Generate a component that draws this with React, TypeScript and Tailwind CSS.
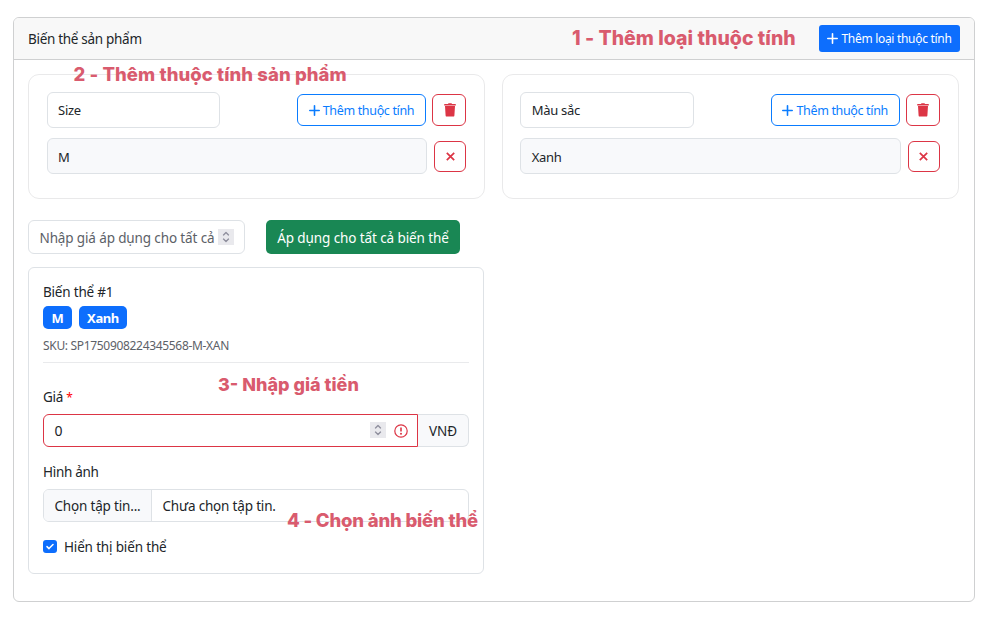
import React from "react";

function Plus() {
  return (
    <svg viewBox="0 0 11 11" className="h-[11px] w-[11px] shrink-0" fill="none" stroke="currentColor" strokeWidth="1.6" strokeLinecap="round">
      <path d="M5.5 0.8v9.4M0.8 5.5h9.4" />
    </svg>
  );
}

function Trash() {
  return (
    <svg viewBox="0 0 12 14" className="ml-px h-[14px] w-[12px]" fill="currentColor">
      <path d="M4 0.9 4.5 0.2h3l.5.7h3.4a.4.4 0 0 1 .4.4v1.1H.2V1.3a.4.4 0 0 1 .4-.4zM1 3h10l-.6 9.4a1.3 1.3 0 0 1-1.3 1.2H2.9a1.3 1.3 0 0 1-1.3-1.2z" />
    </svg>
  );
}

function Cross() {
  return (
    <svg viewBox="0 0 9 9" className="mt-px h-[9px] w-[9px]" fill="none" stroke="currentColor" strokeWidth="1.7">
      <path d="M0.8 0.8l7.4 7.4M8.2 0.8l-7.4 7.4" />
    </svg>
  );
}

function Spinner() {
  return (
    <span className="flex h-4 w-4 shrink-0 items-center justify-center bg-[#e9e9ed] text-[#8f8f9d]">
      <svg viewBox="0 0 16 16" className="h-4 w-4" fill="none" stroke="currentColor" strokeWidth="1.4" strokeLinecap="round" strokeLinejoin="round">
        <path d="M5.5 5.9 8 3.6l2.500 2.300M5.5 10.1 8 12.4l2.500-2.300" />
      </svg>
    </span>
  );
}

function AttributeCard({ name, value }: { name: string; value: string }) {
  return (
    <div className="h-[125px] w-[457px] rounded-[11px] border border-[#e9e9ea] pl-[17.6px] pr-[18px] pt-[17px]">
      <div className="flex items-center">
        <div className="flex h-9 w-[173.4px] items-center rounded-md border border-[#dee2e6] pl-[10.5px] text-[13px] tracking-[-0.3px]">{name}</div>
        <button className="ml-auto flex h-8 w-[129px] items-center justify-center gap-[3px] whitespace-nowrap rounded-md border border-[#0a7cff] pt-px text-[12.5px] tracking-[-0.34px] text-[#0a7cff]">
          <Plus />
          Thêm thuộc tính
        </button>
        <button className="ml-[6px] flex h-8 w-[34px] items-center justify-center rounded-md border border-[#dc3545] text-[#dc3545]">
          <Trash />
        </button>
      </div>
      <div className="mt-[10px] flex items-center justify-between">
        <div className="flex h-9 w-[380.4px] items-center rounded-md border border-[#dee2e6] bg-[#f8f9fb] pl-[10.5px] pt-[2px] text-[13px] tracking-[-0.3px]">{value}</div>
        <button className="flex h-[31px] w-8 items-center justify-center rounded-md border border-[#dc3545] text-[#dc3545]">
          <Cross />
        </button>
      </div>
    </div>
  );
}

function Note({ className, children }: { className: string; children: React.ReactNode }) {
  return (
    <div className={"absolute whitespace-nowrap font-['Inter','Liberation_Sans',sans-serif] font-extrabold leading-6 text-[#d95b6e] " + className}>
      {children}
    </div>
  );
}

export default function App() {
  return (
    <div className="relative h-[632px] w-[985px] bg-white pl-[13px] pt-[17px] font-['Noto_Sans','Open_Sans',sans-serif] text-[14px] leading-5 text-[#212529]">
      <div className="h-[585px] w-[962px] overflow-hidden rounded-md border border-[#cfd0d1]">
        <header className="flex h-[42px] items-center justify-between border-b border-[#cfd0d1] bg-[#f8f8f8] px-[14px]">
          <span className="text-[13.5px] tracking-[-0.3px]">Biến thể sản phẩm</span>
          <button className="flex h-[27px] w-[141px] items-center justify-center gap-[3px] whitespace-nowrap rounded-[3px] bg-[#0d6efd] text-[12px] tracking-[-0.3px] text-white">
            <Plus />
            Thêm loại thuộc tính
          </button>
        </header>

        <main className="px-[14px] pt-[14px]">
          <div className="flex gap-[16.7px]">
            <AttributeCard name="Size" value="M" />
            <AttributeCard name="Màu sắc" value="Xanh" />
          </div>

          <div className="mt-[21px] flex">
            <div className="flex h-[34px] w-[217px] items-center justify-between whitespace-nowrap rounded-md border border-[#dee2e6] pl-[10.5px] pr-[10px] text-[#5c6167]">
              <span className="pt-[2px] text-[13.5px] tracking-[-0.13px]">Nhập giá áp dụng cho tất cả</span>
              <Spinner />
            </div>
            <button className="ml-[21px] flex h-[34px] w-[194px] items-center justify-center whitespace-nowrap rounded-[5px] bg-[#198754] pt-[2px] text-[13.5px] tracking-[-0.1px] text-white">
              Áp dụng cho tất cả biến thể
            </button>
          </div>

          <section className="mt-[13px] h-[307px] w-[456px] rounded-md border border-[#dee2e6] px-[14px] pt-[14px]">
            <h2 className="text-[13.5px] tracking-[-0.2px]">Biến thể #1</h2>
            <div className="mt-1 flex gap-[7px] text-[13px] font-bold tracking-[-0.4px] text-white">
              <span className="flex h-[23px] w-[29px] items-center justify-center rounded-[5px] bg-[#0d6efd] pt-px">M</span>
              <span className="flex h-[23px] w-12 items-center justify-center rounded-[5px] bg-[#0d6efd] pt-px">Xanh</span>
            </div>
            <div className="mt-[7px] text-[12px] tracking-[-0.32px] text-[#5c6167]">SKU: SP1750908224345568-M-XAN</div>
            <hr className="mt-[6px] border-[#e9eaec]" />

            <label className="mt-6 block h-5 text-[13.5px] tracking-[-0.3px]">
              Giá <span className="text-[12px] leading-none text-[#ff0000]">*</span>
            </label>
            <div className="mt-[7px] flex h-[33px]">
              <div className="flex w-[375px] items-center rounded-l-md border border-[#dc3545] pl-[10.5px] pr-[9px]">
                <span className="pt-px">0</span>
                <span className="ml-auto -mt-px"><Spinner /></span>
                <svg viewBox="0 0 14 14" className="ml-2 h-[14px] w-[14px]" fill="none" stroke="#dc3545" strokeWidth="1.2">
                  <circle cx="7" cy="7" r="6.2" />
                  <path d="M7 3.4v4.2" strokeWidth="1.6" />
                  <circle cx="7" cy="9.8" r="1" fill="#dc3545" stroke="none" />
                </svg>
              </div>
              <div className="flex w-[51px] items-center justify-center rounded-r-md border border-l-0 border-[#dee2e6] bg-[#f8f9fb] text-[13.5px] tracking-[-0.1px]">VNĐ</div>
            </div>

            <div className="mt-[15px] text-[13.5px] tracking-[-0.3px]">Hình ảnh</div>
            <div className="mt-[7px] flex h-[33px] overflow-hidden whitespace-nowrap rounded-md border border-[#dee2e6] text-[13.5px] tracking-[-0.18px]">
              <span className="flex w-[108px] items-center border-r border-[#dee2e6] bg-[#f8f9fb] pl-[10.5px] pt-px">Chọn tập tin...</span>
              <span className="flex items-center pl-[10.5px] pt-px">Chưa chọn tập tin.</span>
            </div>

            <label className="mt-[15px] flex items-center text-[13.5px] tracking-[-0.16px]">
              <span className="-mt-px flex h-[13px] w-[14px] items-center justify-center rounded-[3px] bg-[#0d6efd]">
                <svg viewBox="0 0 8 7" className="h-[7px] w-2" fill="none" stroke="white" strokeWidth="1.5" strokeLinecap="round" strokeLinejoin="round">
                  <path d="M1 3.6 3 5.6 7 1.5" />
                </svg>
              </span>
              <span className="ml-[7px]">Hiển thị biến thể</span>
            </label>
          </section>
        </main>
      </div>

      <Note className="left-[572px] top-[26px] text-[19.5px] tracking-[0.03px]">1 - Thêm loại thuộc tính</Note>
      <Note className="left-[73.5px] top-[62px] text-[18.5px] tracking-[0.08px]">2 - Thêm thuộc tính sản phẩm</Note>
      <Note className="left-[218px] top-[372.5px] text-[18px]">3- Nhập giá tiền</Note>
      <Note className="left-[287px] top-[508px] text-[18.5px] tracking-[-0.18px]">4 - Chọn ảnh biến thể</Note>
    </div>
  );
}
